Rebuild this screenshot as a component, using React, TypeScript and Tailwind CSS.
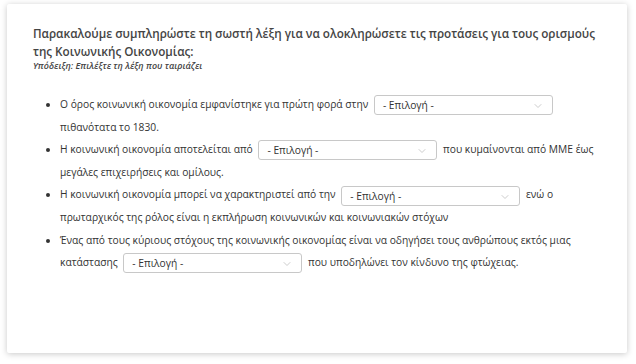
import { ChevronDown } from 'lucide-react';

const Choice = () => (
  <span className="relative mx-[3px] inline-block h-[20px] w-[179px] rounded-[3px] border border-[#c8c8c8] bg-white pl-2 align-middle text-[10.25px] leading-[18px] text-[#333]">
    - Επιλογή -
    <ChevronDown className="absolute right-2 top-[4px] h-3 w-3 text-[#bbb]" strokeWidth={1.5} />
  </span>
);

export default function App() {
  return (
    <div className="h-[364px] w-[636px] bg-white pl-[7px] pr-[9px] pt-[4px] pb-[11px] font-['Open_Sans',sans-serif] text-[#333]">
      <div className="h-full rounded-[2px] bg-white pl-[26px] pr-[24px] pt-[20px] shadow-[0_1px_6px_rgba(0,0,0,0.22)]">
        <h1 className="text-[11.7px] font-semibold leading-[18px] text-[#444]">
          Παρακαλούμε συμπληρώστε τη σωστή λέξη για να ολοκληρώσετε τις προτάσεις για τους ορισμούς της Κοινωνικής Οικονομίας:
        </h1>
        <p className="text-[9px] font-semibold italic leading-[11px] text-[#444]">Υπόδειξη: Επιλέξτε τη λέξη που ταιριάζει</p>

        <ul className="mt-[22px] list-disc pl-[27px] text-[10.25px] leading-[22.6px] marker:text-[10px]">
          <li>
            Ο όρος κοινωνική οικονομία εμφανίστηκε για πρώτη φορά στην <Choice /> πιθανότατα το 1830.
          </li>
          <li>
            Η κοινωνική οικονομία αποτελείται από <Choice /> που κυμαίνονται από ΜΜΕ έως μεγάλες επιχειρήσεις και ομίλους.
          </li>
          <li>
            Η κοινωνική οικονομία μπορεί να χαρακτηριστεί από την <Choice /> ενώ ο πρωταρχικός της ρόλος είναι η εκπλήρωση κοινωνικών και κοινωνιακών στόχων
          </li>
          <li>
            Ένας από τους κύριους στόχους της κοινωνικής οικονομίας είναι να οδηγήσει τους ανθρώπους εκτός μιας κατάστασης <Choice /> που υποδηλώνει τον κίνδυνο της φτώχειας.
          </li>
        </ul>
      </div>
    </div>
  );
}
